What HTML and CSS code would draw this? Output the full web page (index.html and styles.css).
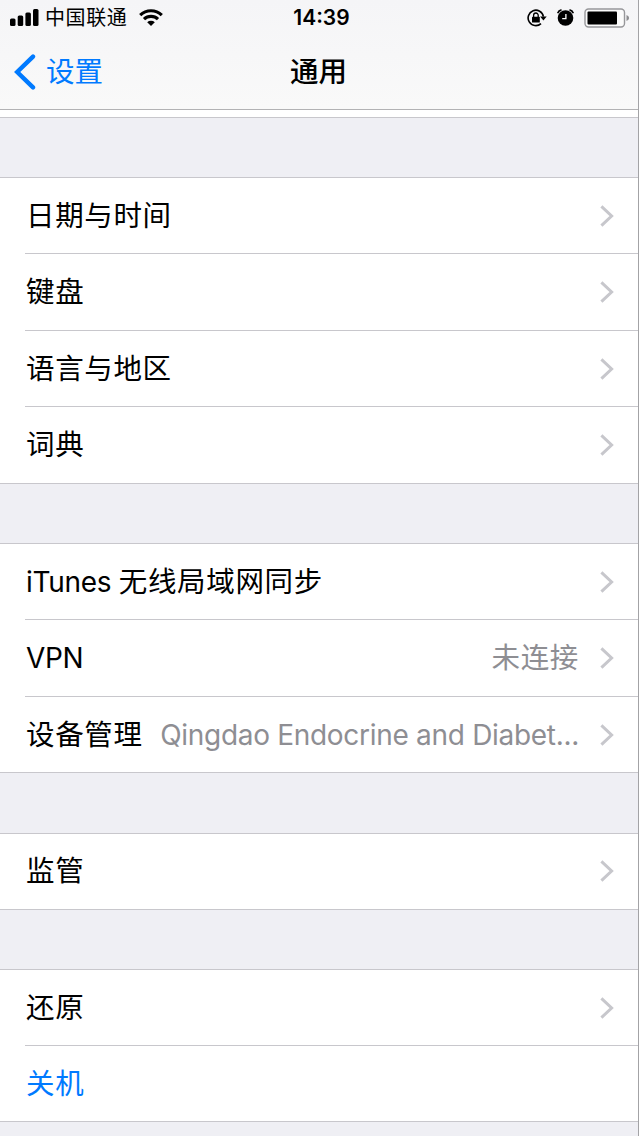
FILE: index.html
```html
<!DOCTYPE html>
<html lang="zh-CN">
<head>
<meta charset="utf-8">
<title>通用</title>
<link rel="stylesheet" href="styles.css">
</head>
<body>
<svg class="defs" aria-hidden="true"><symbol id="chevron" viewBox="0 0 14 22"><path d="M1.4 1.4 11.6 11 1.4 20.6" fill="none" stroke="#c7c7cc" stroke-width="3"/></symbol></svg>
<div class="screen">
  <header class="header">
    <div class="status">
      <div class="status-left">
        <svg class="signal" viewBox="0 0 29 18"><rect x="0" y="9.5" width="5.5" height="7.5" rx="1.5"/><rect x="7.7" y="6.5" width="5.5" height="10.5" rx="1.5"/><rect x="15.4" y="3.5" width="5.5" height="13.5" rx="1.5"/><rect x="23" y="0" width="5.5" height="17" rx="1.5"/></svg>
        <span class="carrier">中国联通</span>
        <svg class="wifi" viewBox="0 0 24 17"><path d="M1.2 6.2a15.4 15.4 0 0 1 21.6 0M5 10.2a10 10 0 0 1 14 0" fill="none" stroke="#000" stroke-width="3.1"/><path d="M8.2 13.2a5.6 5.6 0 0 1 7.6 0L12 17z"/></svg>
      </div>
      <time class="clock">14:39</time>
      <div class="status-right">
        <svg class="lock" viewBox="0 0 20 18"><path d="M14 14.6A7.7 7.7 0 1 1 16.4 7.6" fill="none" stroke="#000" stroke-width="1.6"/><path d="M13.1 7.6h6.6l-3.3 4z"/><rect x="5" y="7.7" width="7.8" height="5.8" rx=".6"/><path d="M6.6 8V6.3a2.3 2.3 0 0 1 4.6 0V8" fill="none" stroke="#000" stroke-width="1.3"/></svg>
        <svg class="alarm" viewBox="0 0 17 17"><circle cx="8.5" cy="9" r="7.8"/><path d="M.7 4.2Q1.5 1.4 4.5.9M16.3 4.2Q15.5 1.4 12.5.9" fill="none" stroke="#000" stroke-width="1.6"/><path d="M8.9 5v4.6H5.2" fill="none" stroke="#fff" stroke-width="1.3"/></svg>
        <svg class="battery" viewBox="0 0 46 20"><rect x="1" y="1" width="39.5" height="18" rx="3.5" fill="#fbfbfb" stroke="#97979a" stroke-width="1.4"/><rect x="3.5" y="3.5" width="29.5" height="13" rx="1"/><path d="M42.5 7q2.6 1 2.6 3t-2.6 3z" fill="#8c8c8f"/></svg>
      </div>
    </div>
    <nav class="nav">
      <a class="back"><svg class="back-icon" viewBox="0 0 22 36"><path d="M19 2.6 3.2 18 19 33.4" fill="none" stroke="#007aff" stroke-width="4.4" stroke-linecap="round"/></svg><span>设置</span></a>
      <h1 class="title">通用</h1>
    </nav>
  </header>
  <main class="list">
    <div class="tail"></div>
    <section class="group">
      <div class="row"><span class="label">日期与时间</span><svg class="chevron"><use href="#chevron"/></svg></div>
      <div class="row tall"><span class="label">键盘</span><svg class="chevron"><use href="#chevron"/></svg></div>
      <div class="row"><span class="label">语言与地区</span><svg class="chevron"><use href="#chevron"/></svg></div>
      <div class="row tall"><span class="label">词典</span><svg class="chevron"><use href="#chevron"/></svg></div>
    </section>
    <section class="group">
      <div class="row"><span class="label"><span class="latin">iTunes </span>无线局域网同步</span><svg class="chevron"><use href="#chevron"/></svg></div>
      <div class="row tall"><span class="label"><span class="latin">VPN</span></span><span class="value">未连接</span><svg class="chevron"><use href="#chevron"/></svg></div>
      <div class="row"><span class="label">设备管理</span><span class="value latin">Qingdao Endocrine and Diabet...</span><svg class="chevron"><use href="#chevron"/></svg></div>
    </section>
    <section class="group spaced">
      <div class="row"><span class="label">监管</span><svg class="chevron"><use href="#chevron"/></svg></div>
    </section>
    <section class="group">
      <div class="row"><span class="label">还原</span><svg class="chevron"><use href="#chevron"/></svg></div>
      <div class="row"><span class="label action">关机</span></div>
    </section>
  </main>
</div>
</body>
</html>
```

FILE: styles.css
```css
* { box-sizing: border-box; }
body { margin: 0; background: #efeff4; color: #000; font-family: Inter, "Noto Sans CJK SC", sans-serif; }
svg { display: block; flex: none; }
.defs { display: none; }
.screen { width: 639px; height: 1136px; overflow: hidden; border-right: 1px solid #a3a3a6; background: #efeff4; }
.header { height: 110px; background: linear-gradient(#f5f5f7, #f9f9f9); border-bottom: 1px solid #b2b2b4; }
.status { height: 35px; display: grid; grid-template-columns: 1fr auto 1fr; align-items: center; padding: 0 8px 0 10px; }
.status-left, .status-right { display: flex; align-items: center; }
.status-right { justify-content: flex-end; }
.signal { width: 29px; height: 18px; }
.carrier { font-size: 20px; line-height: 30px; letter-spacing: .6px; margin-left: 6px; }
.wifi { width: 24px; height: 17px; margin-left: 12px; }
.clock { font-size: 21px; line-height: 30px; font-weight: 600; letter-spacing: 0; padding-left: 3px; }
.lock { width: 20px; height: 18px; margin-right: 10px; }
.alarm { width: 17px; height: 17px; margin-right: 10px; }
.battery { width: 46px; height: 20px; }
.nav { height: 74px; display: grid; grid-template-columns: 1fr auto 1fr; align-items: center; padding: 0 13px 0 14px; }
.back { display: flex; align-items: center; gap: 10px; color: #007aff; font-size: 28.5px; line-height: 40px; }
.back-icon { width: 22px; height: 36px; }
.title { margin: 0 2px 0 0; font-size: 28.5px; line-height: 40px; font-weight: 500; }
.tail { height: 8px; background: #fff; border-bottom: 1px solid #c8c7cc; }
.group { margin-top: 59px; background: #fff; border-top: 1px solid #c8c7cc; border-bottom: 1px solid #c8c7cc; }
.group.spaced { margin-top: 60px; }
.row { height: 76px; margin-left: 25px; padding: 0 24px 0 1px; display: flex; align-items: center; border-bottom: 1px solid #c8c7cc; }
.row.tall { height: 77px; }
.row:last-child { height: 75px; border-bottom: 0; }
.row.tall:last-child { height: 76px; }
.spaced .row { padding-bottom: 2px; }
.label { font-size: 28.5px; line-height: 40px; letter-spacing: .65px; white-space: pre; }
.value { font-size: 28.5px; line-height: 40px; letter-spacing: .65px; color: #8e8e93; margin-left: auto; white-space: nowrap; }
.latin { font-size: 28px; letter-spacing: -.3px; }
.value.latin { font-size: 28px; letter-spacing: -.3px; }
.chevron { width: 14px; height: 22px; margin-left: 21px; }
.label + .chevron { margin-left: auto; }
.action { color: #007aff; }
```
